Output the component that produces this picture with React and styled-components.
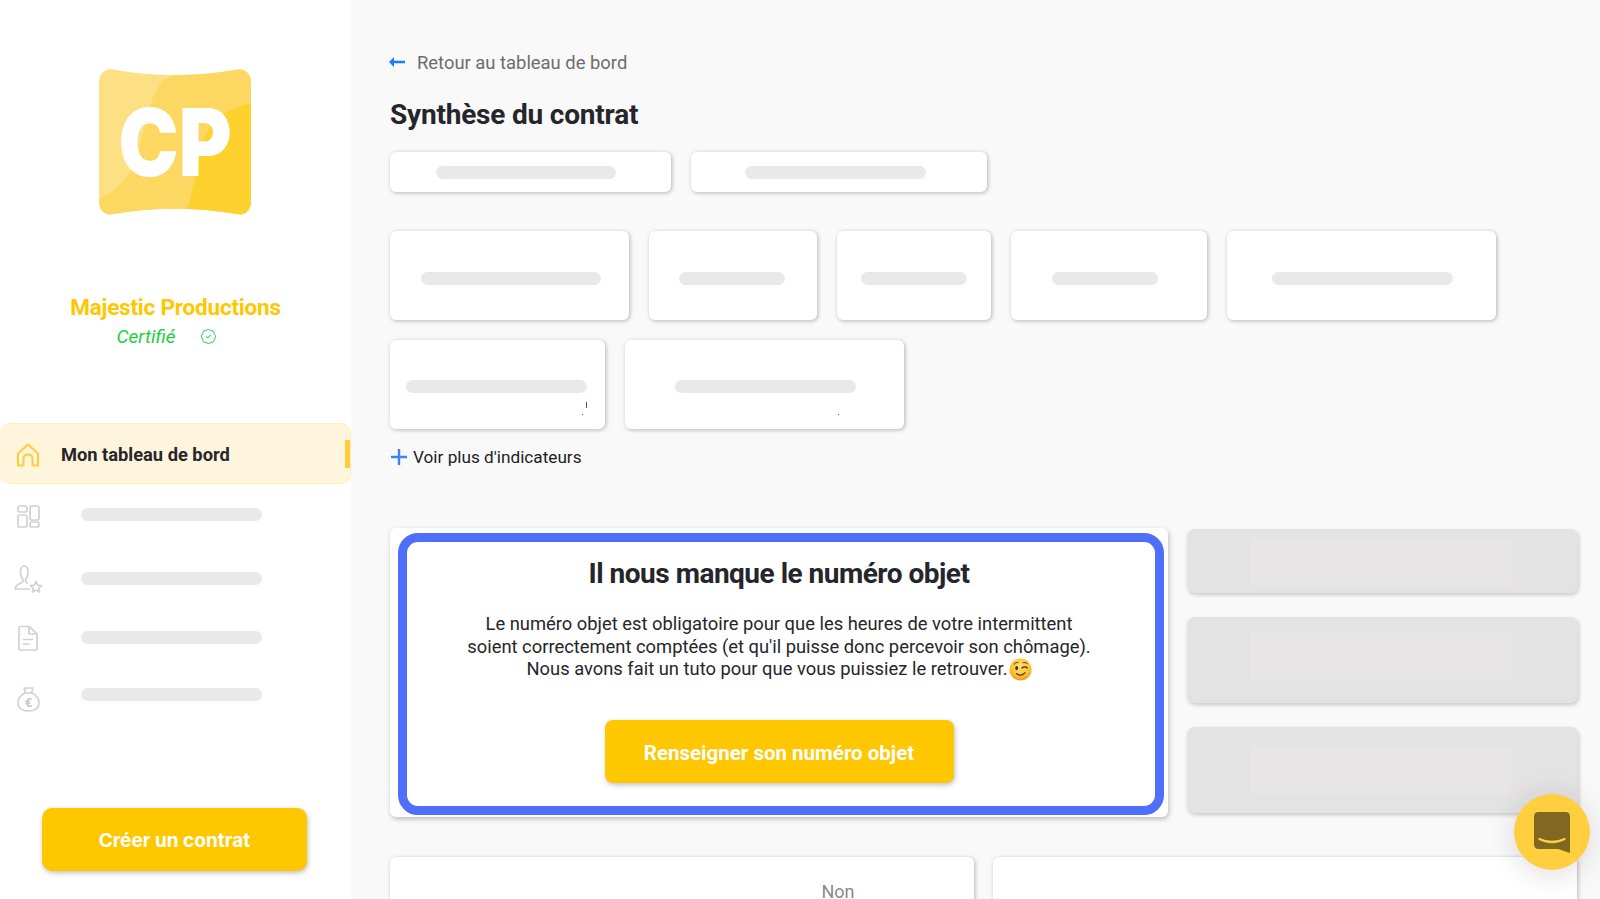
import styled, { createGlobalStyle } from 'styled-components'
import { BadgeCheck } from 'lucide-react'

const GlobalStyle = createGlobalStyle`
  html, body {
    margin: 0;
    height: 100%;
    overflow: hidden;
    background: #f9f9f9;
    font-family: Roboto, 'Liberation Sans', sans-serif;
  }
  * { box-sizing: border-box; }
`

const Page = styled.div`
  display: flex;
  height: 100vh;
  overflow: hidden;
`
const Sidebar = styled.aside`
  flex: 0 0 351px;
  display: flex;
  flex-direction: column;
  padding-top: 69px;
  background: #fff;
`
const LogoBox = styled.svg`
  display: block;
  width: 152px;
  height: 146px;
  margin-left: 98.5px;
  overflow: visible;
`
const CompanyName = styled.div`
  margin-top: 78px;
  font-size: 22.5px;
  line-height: 28px;
  font-weight: 700;
  text-align: center;
  letter-spacing: -0.2px;
  color: #ffc700;
`
const CertifiedRow = styled.div`
  display: flex;
  align-items: center;
  justify-content: center;
  gap: 25px;
  height: 24px;
  margin-top: 3px;
  padding-right: 17px;
  font-size: 19px;
  font-style: italic;
  color: #22cf3f;
  svg { color: #45d46e; }
`
const ActiveNav = styled.div`
  position: relative;
  display: flex;
  align-items: center;
  height: 61px;
  margin-top: 75px;
  padding: 2px 0 0 14px;
  background: #fff5dc;
  border: 1px solid #ffeebd;
  border-left: 0;
  border-radius: 10px;
  font-size: 18.3px;
  font-weight: 700;
  color: #25262b;
  &::after {
    content: '';
    position: absolute;
    top: 16px;
    right: 0;
    width: 5px;
    height: 28px;
    background: #ffcd3c;
  }
`
const NavLabel = styled.span`
  margin-left: 19px;
`
const NavRow = styled.div`
  display: flex;
  align-items: center;
  height: ${p => p.$height}px;
  padding-left: 14px;
`
const NavIcon = styled.svg`
  flex: 0 0 28px;
  width: 28px;
  height: 28px;
  margin-top: ${p => p.$nudge || 0}px;
  fill: none;
  stroke: ${p => p.$active ? '#ffcd3c' : '#d2d2d2'};
  stroke-width: 1.7;
  stroke-linecap: round;
  stroke-linejoin: round;
`
const Skeleton = styled.div`
  flex: 0 0 ${p => p.$width}px;
  width: ${p => p.$width}px;
  height: 13px;
  border-radius: 7px;
  background: #eae8e9;
`
const NavSkeleton = styled(Skeleton)`
  margin-left: 39px;
`
const CreateButton = styled.button`
  width: 265px;
  height: 63px;
  margin: 82px 0 0 42px;
  padding: 2px 0 0;
  border: 0;
  border-radius: 10px;
  background: #ffc700;
  box-shadow: 1px 2px 5px rgba(0, 0, 0, 0.25);
  color: #fff;
  font-family: Inter, sans-serif;
  font-size: 19px;
  font-weight: 700;
`
const Main = styled.main`
  flex: 1;
  min-width: 0;
  padding: 50px 0 0 39px;
  background: #f9f9f9;
`
const BackLink = styled.div`
  display: flex;
  align-items: center;
  gap: 12px;
  height: 24px;
  margin-left: -2px;
  font-size: 18.4px;
  color: #6d6d6d;
`
const Title = styled.h1`
  margin: 23px 0 0;
  font-size: 28px;
  line-height: 36px;
  font-weight: 700;
  letter-spacing: -0.2px;
  color: #25262b;
`
const CardRow = styled.div`
  display: flex;
  gap: ${p => p.$gap}px;
  margin-top: ${p => p.$top}px;
`
const StatCard = styled.div`
  position: relative;
  flex: 0 0 ${p => p.$width}px;
  height: ${p => p.$height}px;
  padding: ${p => p.$padTop}px 0 0 ${p => p.$inset}px;
  background: #fff;
  border-radius: 6px;
  box-shadow: 1px 1px 4px rgba(0, 0, 0, 0.28);
`
const Speck = styled.span`
  position: absolute;
  left: ${p => p.$x}px;
  top: ${p => p.$y}px;
  width: 1px;
  height: ${p => p.$h}px;
  background: #555;
`
const MoreLink = styled.div`
  display: flex;
  align-items: center;
  gap: 6px;
  height: 24px;
  margin-top: 16px;
  font-size: 17.2px;
  color: #1d1d1f;
  svg { margin-left: 1px; }
`
const InfoRow = styled.div`
  display: flex;
  gap: 19px;
  margin-top: 59px;
`
const InfoCard = styled.section`
  flex: 0 0 778px;
  height: 289px;
  padding: 5px 4px 2px 8px;
  background: #fff;
  border-radius: 6px;
  box-shadow: 1px 2px 5px rgba(0, 0, 0, 0.25);
`
const InfoFrame = styled.div`
  display: flex;
  flex-direction: column;
  align-items: center;
  height: 282px;
  padding-right: 4px;
  border: 9px solid #4f6ffb;
  border-radius: 20px;
  background: #fff;
`
const InfoTitle = styled.h2`
  margin: 14px 0 0;
  font-size: 28px;
  line-height: 36px;
  font-weight: 700;
  letter-spacing: -0.5px;
  color: #25262b;
`
const InfoText = styled.p`
  margin: 21px 0 0;
  font-size: 18.35px;
  line-height: 22.5px;
  text-align: center;
  color: #26262a;
`
const Wink = styled.svg`
  display: inline-block;
  width: 23px;
  height: 23px;
  margin: -4px 0 -4px 1px;
  vertical-align: -2px;
`
const InfoButton = styled.button`
  flex: 0 0 63px;
  width: 349px;
  height: 63px;
  margin: 39.5px 0 0;
  padding: 2px 0 0;
  border: 0;
  border-radius: 8px;
  background: #ffc700;
  box-shadow: 1px 2px 5px rgba(0, 0, 0, 0.25);
  color: #fff;
  font-family: Roboto, sans-serif;
  font-size: 20.5px;
  font-weight: 700;
`
const SideColumn = styled.div`
  display: flex;
  flex-direction: column;
  gap: 24px;
  width: 391px;
  padding-top: 1px;
`
const GhostCard = styled.div`
  display: flex;
  justify-content: center;
  padding: ${p => p.$padTop}px 4px 0 0;
  height: ${p => p.$height}px;
  border-radius: 8px;
  background: #e4e3e3;
  box-shadow: 1px 2px 4px rgba(0, 0, 0, 0.2);
`
const GhostInner = styled.div`
  width: 261px;
  height: 48px;
  background: #e7e5e6;
`
const BottomRow = styled.div`
  display: flex;
  gap: 19px;
  margin-top: 40px;
`
const BottomCard = styled.div`
  flex: 0 0 584px;
  height: 120px;
  padding-top: 28px;
  background: #fff;
  border-radius: 6px;
  box-shadow: 1px 1px 4px rgba(0, 0, 0, 0.28);
  font-size: 18px;
  line-height: 14px;
  text-align: center;
  color: #8a8a8a;
`
const BottomLabel = styled.span`
  margin-left: 312px;
`
const ChatButton = styled.div`
  position: fixed;
  right: 10px;
  bottom: 29px;
  display: flex;
  align-items: center;
  justify-content: center;
  width: 76px;
  height: 76px;
  border-radius: 50%;
  background: #ffcf40;
  box-shadow: 0 4px 30px rgba(0, 0, 0, 0.14);
`

const titleCards = [
  { width: 281, inset: 46, bar: 180 },
  { width: 296, inset: 54, bar: 181 },
]
const statCards = [
  { width: 239, inset: 31, bar: 180 },
  { width: 168, inset: 30, bar: 106 },
  { width: 154, inset: 24, bar: 106 },
  { width: 196, inset: 41, bar: 106 },
  { width: 269, inset: 45, bar: 181 },
]
const navRows = [
  { height: 60, icon: <DashIcon nudge={3} /> },
  { height: 68, icon: <UserStarIcon /> },
  { height: 51, icon: <FileIcon /> },
  { height: 63, icon: <MoneyIcon nudge={8} /> },
]

function Logo() {
  const shape = 'M0 14C0 5 6 -1 14 .5C55 8 97 8 138 .5C146 -1 152 5 152 14L152 132C152 141 146 147 138 145C97 138 55 138 14 145C6 147 0 141 0 132Z'
  return (
    <LogoBox viewBox="0 0 152 146">
      <defs>
        <clipPath id="logoClip"><path d={shape} /></clipPath>
      </defs>
      <g clipPath="url(#logoClip)">
        <rect x="-2" y="-2" width="156" height="150" fill="#fde083" />
        <path d="M75 6C60 10 55 25 50 40C45 60 40 85 30 105C22 118 10 125 0 130L0 150L152 150L152 0Z" fill="#fcd762" />
        <path d="M152 34C135 38 122 45 113 55C104 68 101 85 98 100C95 115 92 128 88 140L88 150L152 150Z" fill="#fdd22f" />
      </g>
      <text x="76" y="107" textAnchor="middle" textLength="113" lengthAdjust="spacingAndGlyphs" fontFamily="Inter, sans-serif" fontSize="94" fontWeight="900" fill="#fff">CP</text>
    </LogoBox>
  )
}

function HomeIcon() {
  return (
    <NavIcon viewBox="0 0 28 28" $active>
      <path d="M4 12.5L14 3.5L24 12.5V24.5H18.5V17.5C18.5 15 16.5 13.5 14 13.5C11.5 13.5 9.5 15 9.5 17.5V24.5H4Z" strokeWidth="2" />
    </NavIcon>
  )
}

function DashIcon({ nudge }) {
  return (
    <NavIcon viewBox="0 0 28 28" $nudge={nudge}>
      <rect x="4" y="4" width="9" height="6" rx="2" />
      <rect x="4" y="13" width="9" height="12" rx="2" />
      <rect x="16" y="4" width="9" height="14" rx="2" />
      <rect x="16" y="20" width="9" height="5" rx="2" />
    </NavIcon>
  )
}

function UserStarIcon() {
  return (
    <NavIcon viewBox="0 0 28 28" strokeWidth="1.2" style={{ overflow: 'visible' }}>
      <path d="M10 2C7 2 6.5 5 6.5 8C6.5 11 7.5 14 9 15.5C9.5 17.5 8.5 18.5 6 19.5C3.5 20.5 1.5 22 1 25H15" />
      <path d="M10 2C13 2 14 5 14 8C14 11 13 14 11.5 15.5C11.2 16.8 11.5 18 13 19" />
      <path d="M22 17.5L23.7 21.2L27.6 21.6L24.7 24.2L25.5 28L22 26L18.5 28L19.3 24.2L16.4 21.6L20.3 21.2Z" />
    </NavIcon>
  )
}

function FileIcon() {
  return (
    <NavIcon viewBox="0 0 28 28">
      <path d="M6 2.5H15.5L23 10V24C23 25 22 26 21 26H7C6 26 5 25 5 24V4C5 3 5.5 2.5 6 2.5Z" />
      <path d="M15 3V10H22.5" />
      <path d="M9.5 15.5H18.5M9.5 20H15" />
    </NavIcon>
  )
}

function MoneyIcon({ nudge }) {
  return (
    <NavIcon viewBox="0 0 28 28" $nudge={nudge}>
      <path d="M10 3H19L17.5 8H11.5Z" />
      <path d="M11 8C7 10 4 14 4 18C4 23 8 26 14.5 26C21 26 25 23 25 18C25 14 22 10 18 8" />
      <text x="14.5" y="22" textAnchor="middle" fontSize="13" fontFamily="Roboto, sans-serif" stroke="none" fill="#c4c4c4" fontWeight="700">€</text>
    </NavIcon>
  )
}

function BackArrow() {
  return (
    <svg width="17" height="12" viewBox="0 0 17 12">
      <path d="M6 1L1 6L6 11V7.2H17V4.8H6Z" fill="#1a7cff" />
    </svg>
  )
}

function PlusIcon() {
  return (
    <svg width="16" height="16" viewBox="0 0 16 16">
      <path d="M8 0V16M0 8H16" stroke="#3b82f6" strokeWidth="2.4" />
    </svg>
  )
}

function WinkFace() {
  return (
    <Wink viewBox="0 0 24 24">
      <defs>
        <radialGradient id="winkFill" cx="50%" cy="35%" r="70%">
          <stop offset="0%" stopColor="#ffe27a" />
          <stop offset="65%" stopColor="#fbc02d" />
          <stop offset="100%" stopColor="#ee8a1f" />
        </radialGradient>
      </defs>
      <circle cx="12" cy="12" r="11.5" fill="url(#winkFill)" />
      <ellipse cx="8" cy="10.5" rx="1.5" ry="2.2" fill="#4a2c10" />
      <path d="M13.5 10.5C15 9 17.5 9 19 10.5" fill="none" stroke="#4a2c10" strokeWidth="1.4" strokeLinecap="round" />
      <path d="M5.5 6.5C6.5 5 8 4.6 9.5 4.8M14.5 5C16 4.4 17.8 4.8 19 6" fill="none" stroke="#7a4a14" strokeWidth="1.1" strokeLinecap="round" />
      <path d="M8 16.5C10.5 18.5 14 18.3 16.5 15.5" fill="none" stroke="#4a2c10" strokeWidth="1.4" strokeLinecap="round" />
    </Wink>
  )
}

function ChatIcon() {
  return (
    <svg width="36" height="41" viewBox="0 0 36 41">
      <path d="M4 0H32C34 0 36 2 36 4V41L24 37H4C2 37 0 35 0 33V4C0 2 2 0 4 0Z" fill="#806821" />
      <path d="M5.5 27C13 31 23 31 30.5 27" fill="none" stroke="#ffcf40" strokeWidth="2.4" strokeLinecap="round" />
    </svg>
  )
}

export default function App() {
  return (
    <Page>
      <GlobalStyle />
      <Sidebar>
        <Logo />
        <CompanyName>Majestic Productions</CompanyName>
        <CertifiedRow>
          <span>Certifié</span>
          <BadgeCheck size={17} strokeWidth={1.5} />
        </CertifiedRow>
        <ActiveNav>
          <HomeIcon />
          <NavLabel>Mon tableau de bord</NavLabel>
        </ActiveNav>
        {navRows.map((row, i) => (
          <NavRow key={i} $height={row.height}>
            {row.icon}
            <NavSkeleton $width={181} />
          </NavRow>
        ))}
        <CreateButton>Créer un contrat</CreateButton>
      </Sidebar>

      <Main>
        <BackLink>
          <BackArrow />
          <span>Retour au tableau de bord</span>
        </BackLink>
        <Title>Synthèse du contrat</Title>

        <CardRow $gap={20} $top={19}>
          {titleCards.map((card, i) => (
            <StatCard key={i} $width={card.width} $height={40} $padTop={14} $inset={card.inset}>
              <Skeleton $width={card.bar} />
            </StatCard>
          ))}
        </CardRow>

        <CardRow $gap={20} $top={39}>
          {statCards.map((card, i) => (
            <StatCard key={i} $width={card.width} $height={89} $padTop={41} $inset={card.inset}>
              <Skeleton $width={card.bar} />
            </StatCard>
          ))}
        </CardRow>

        <CardRow $gap={20} $top={20}>
          <StatCard $width={215} $height={89} $padTop={40} $inset={16}>
            <Skeleton $width={181} />
            <Speck $x={196} $y={62} $h={6} />
            <Speck $x={192} $y={74} $h={1} />
          </StatCard>
          <StatCard $width={279} $height={89} $padTop={40} $inset={50}>
            <Skeleton $width={181} />
            <Speck $x={213} $y={74} $h={1} />
          </StatCard>
        </CardRow>

        <MoreLink>
          <PlusIcon />
          <span>Voir plus d'indicateurs</span>
        </MoreLink>

        <InfoRow>
          <InfoCard>
            <InfoFrame>
              <InfoTitle>Il nous manque le numéro objet</InfoTitle>
              <InfoText>
                Le numéro objet est obligatoire pour que les heures de votre intermittent<br />
                soient correctement comptées (et qu'il puisse donc percevoir son chômage).<br />
                Nous avons fait un tuto pour que vous puissiez le retrouver.<WinkFace />
              </InfoText>
              <InfoButton>Renseigner son numéro objet</InfoButton>
            </InfoFrame>
          </InfoCard>
          <SideColumn>
            <GhostCard $height={64} $padTop={9}><GhostInner /></GhostCard>
            <GhostCard $height={86} $padTop={15}><GhostInner /></GhostCard>
            <GhostCard $height={86} $padTop={19}><GhostInner /></GhostCard>
          </SideColumn>
        </InfoRow>

        <BottomRow>
          <BottomCard><BottomLabel>Non</BottomLabel></BottomCard>
          <BottomCard />
        </BottomRow>
      </Main>

      <ChatButton><ChatIcon /></ChatButton>
    </Page>
  )
}
